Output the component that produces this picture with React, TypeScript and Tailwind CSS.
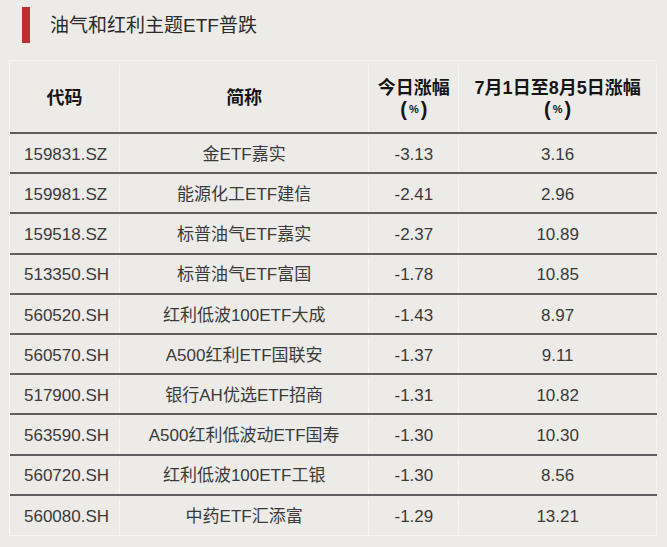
import React from "react";

const rows: [string, string, string, string][] = [
  ["159831.SZ", "金ETF嘉实", "-3.13", "3.16"],
  ["159981.SZ", "能源化工ETF建信", "-2.41", "2.96"],
  ["159518.SZ", "标普油气ETF嘉实", "-2.37", "10.89"],
  ["513350.SH", "标普油气ETF富国", "-1.78", "10.85"],
  ["560520.SH", "红利低波100ETF大成", "-1.43", "8.97"],
  ["560570.SH", "A500红利ETF国联安", "-1.37", "9.11"],
  ["517900.SH", "银行AH优选ETF招商", "-1.31", "10.82"],
  ["563590.SH", "A500红利低波动ETF国寿", "-1.30", "10.30"],
  ["560720.SH", "红利低波100ETF工银", "-1.30", "8.56"],
  ["560080.SH", "中药ETF汇添富", "-1.29", "13.21"],
];

const font = { fontFamily: '"Liberation Sans", "Noto Sans CJK SC", sans-serif' };

function Pct() {
  return (
    <span className="text-[20px] leading-[21px] flex items-center gap-[2px]">
      <span>(</span>
      <span className="text-[11px]">%</span>
      <span>)</span>
    </span>
  );
}

export default function App() {
  return (
    <div className="w-[667px] h-[547px] bg-[#ecebe8] overflow-hidden" style={font}>
      <div className="flex items-center h-[50px] pl-[22px]">
        <div className="w-[8px] h-[36px] bg-[#c1302e]" />
        <div className="ml-[20px] text-[19px] text-[#2a2a2a] leading-none">油气和红利主题ETF普跌</div>
      </div>
      <div className="ml-[9px] mt-[10px] w-[648px] border-t border-l border-[#f7f6f4]">
        <div className="flex h-[73px] pt-[4px] border-b-2 border-[#5e5e5e] font-bold text-[#151515] text-[18px]">
          <div className="w-[110px] flex items-center justify-center border-r border-[#f7f6f4]">代码</div>
          <div className="w-[250px] flex items-center justify-center border-r border-[#f7f6f4]">简称</div>
          <div className="w-[90px] flex flex-col items-center justify-center border-r border-[#f7f6f4] leading-[21px]">
            <span>今日涨幅</span>
            <Pct />
          </div>
          <div className="w-[198px] flex flex-col items-center justify-center border-r border-[#f7f6f4] leading-[21px]">
            <span>7月1日至8月5日涨幅</span>
            <Pct />
          </div>
        </div>
        {rows.map((r, i) => (
          <div
            key={r[0]}
            className={
              "flex h-[40.2px] pt-[3px] text-[17px] text-[#3a3a3a] " +
              (i < rows.length - 1 ? "border-b-2 border-[#5e5e5e]" : "border-b border-[#f7f6f4]")
            }
          >
            <div className="w-[110px] flex items-center pl-[14px] border-r border-[#f7f6f4]">{r[0]}</div>
            <div className="w-[250px] flex items-center justify-center border-r border-[#f7f6f4]">{r[1]}</div>
            <div className="w-[90px] flex items-center justify-center border-r border-[#f7f6f4]">{r[2]}</div>
            <div className="w-[198px] flex items-center justify-center border-r border-[#f7f6f4]">{r[3]}</div>
          </div>
        ))}
      </div>
    </div>
  );
}
